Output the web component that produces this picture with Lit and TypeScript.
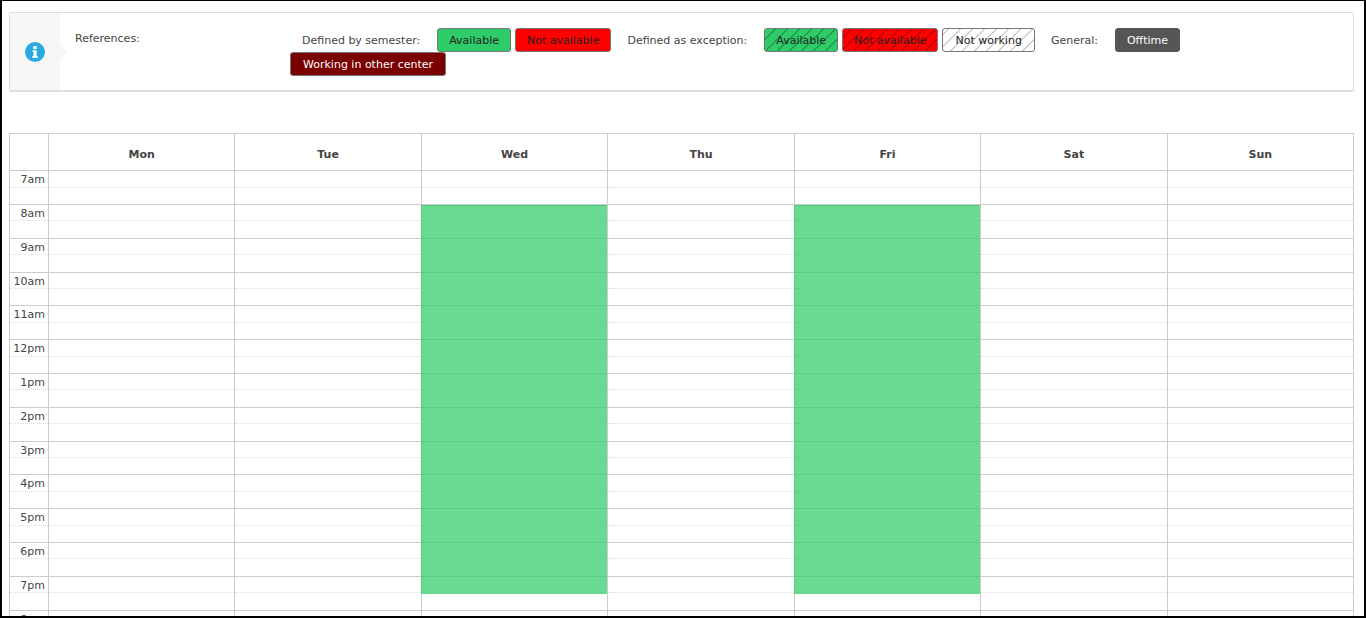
import { LitElement, html, css } from "lit";
import { customElement } from "lit/decorators.js";

const hours = ["7am","8am","9am","10am","11am","12pm","1pm","2pm","3pm","4pm","5pm","6pm","7pm","8pm"];
const days = ["Mon","Tue","Wed","Thu","Fri","Sat","Sun"];
const legend: Array<[string, string]> = [
  ["label","Defined by semester:"],["green","Available"],["red","Not available"],
  ["label","Defined as exception:"],["green hatch","Available"],["red hatch","Not available"],["none hatch-light","Not working"],
  ["label","General:"],["gray","Offtime"],["maroon","Working in other center"],
];
const ROW = 33.8;

@customElement("app-root")
export class AppRoot extends LitElement {
  static styles = css`
    :host { display: block; box-sizing: border-box; height: 618px; overflow: hidden; background: #fff;
      border: solid #000; border-width: 1px 2px 2px 2px; font-family: "DejaVu Sans", Verdana, sans-serif;
      font-size: 11px; color: #444; }
    .page { padding: 11px 10px 0 7px; }
    .panel { position: relative; display: flex; height: 80px; box-sizing: border-box; border: 1px solid #ddd; border-bottom-width: 2px; border-radius: 2px; }
    .icon { position: relative; width: 50px; background: #f7f7f7; display: flex; align-items: center; justify-content: center; }
    .icon::after { content: ""; position: absolute; left: 100%; top: 31px; border: 8px solid transparent; border-left-color: #f7f7f7; border-right: 0; }
    .icon svg { display: block; }
    .title { width: 230px; box-sizing: border-box; padding: 19px 0 0 15px; line-height: 14px; }
    .legend { flex: 0 0 1010px; display: flex; flex-wrap: wrap; align-content: flex-start; padding-top: 15px; }
    .label { height: 24px; display: flex; align-items: center; padding: 0 17px 0 12px; }
    .tag { box-sizing: border-box; height: 24px; display: flex; align-items: center; padding: 0 11px; margin-right: 4px; border: 1px solid #777; border-radius: 3px; color: #222; white-space: nowrap; }
    .green { background-color: #2ecc68; }
    .red { background-color: #ff0000; }
    .none { padding: 0 12px; }
    .gray { background: #555; border-color: #555; color: #fff; }
    .maroon { background: #7a0000; border-color: #777; color: #fff; padding: 0 12px; }
    .hatch { background-image: repeating-linear-gradient(-45deg, transparent 0, transparent 7.5px, rgba(0,0,0,.24) 7.5px, rgba(0,0,0,.24) 8.5px); }
    .hatch-light { background-image: repeating-linear-gradient(-45deg, transparent 0, transparent 7.5px, #cfcfcf 7.5px, #cfcfcf 8.5px); }
    .table { position: relative; margin-top: 41px; border: solid #ccc; border-width: 1px 1px 0 1px; }
    .row { display: grid; grid-template-columns: 38px repeat(7, 1fr); }
    .head { height: 37.2px; border-bottom: 1px solid #ccc; box-sizing: border-box; }
    .head .cell { display: flex; align-items: center; justify-content: center; font-weight: 700; padding-top: 5px; box-sizing: border-box; color: #444; }
    .cell { border-left: 1px solid #ccc; }
    .cell:first-child { border-left: 0; }
    .hour { box-sizing: border-box; height: ${ROW}px; border-bottom: 1px solid #ccc; }
    .half { box-sizing: border-box; height: 50%; border-bottom: 1px dotted #ddd; }
    .time { text-align: right; padding-right: 3px; line-height: 17px; }
    .event { position: absolute; top: 71px; height: 388.5px; width: 186px; background: rgba(46,204,104,.72); border-top: 1px solid rgba(46,180,100,.5); box-sizing: border-box; }
    .wed { left: 411px; }
    .fri { left: 784px; }
  `;

  render() {
    return html`<div class="page">
      <div class="panel">
        <div class="icon">
          <svg width="20" height="20" viewBox="0 0 20 20">
            <circle cx="10" cy="10" r="10" fill="#29abe2"></circle>
            <path fill="#fff" d="M8.3 4h3.4v3H8.3zM7.6 8.3h4.1v6h1.1V16H7.4v-1.7h1.1V10H7.6z"></path>
          </svg>
        </div>
        <div class="title">References:</div>
        <div class="legend">
          ${legend.map(([c, t]) => c === "label"
            ? html`<div class="label">${t}</div>`
            : html`<div class="tag ${c}">${t}</div>`)}
        </div>
      </div>
      <div class="table">
        <div class="row head"><div class="cell"></div>${days.map(d => html`<div class="cell">${d}</div>`)}</div>
        ${hours.map(h => html`<div class="row hour">
          <div class="cell"><div class="half time">${h}</div></div>
          ${days.map(() => html`<div class="cell"><div class="half"></div></div>`)}
        </div>`)}
        <div class="event wed"></div>
        <div class="event fri"></div>
      </div>
    </div>`;
  }
}
